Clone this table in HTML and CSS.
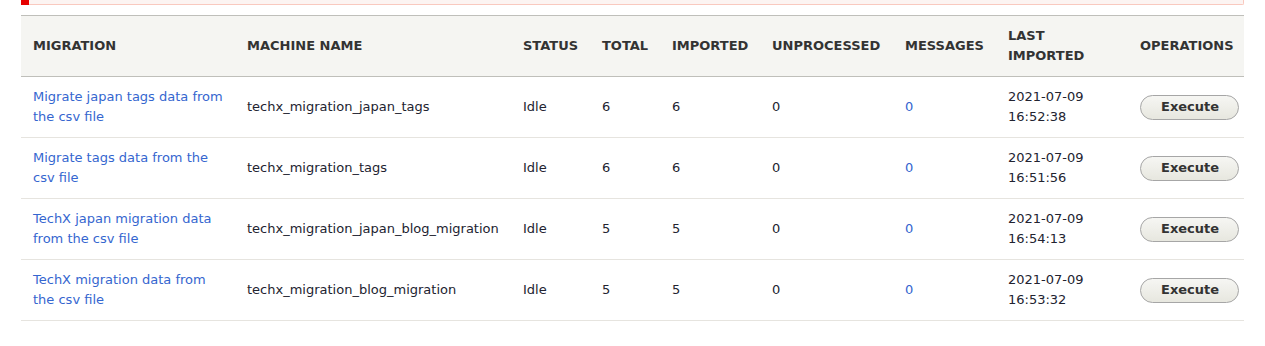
FILE: index.html
```html
<!DOCTYPE html>
<html lang="en">
<head>
<meta charset="utf-8">
<title>Migrations</title>
<link rel="stylesheet" href="styles.css">
</head>
<body>
<div class="page">
  <div class="messages messages-error"></div>
  <table class="migrations">
    <colgroup>
      <col class="c-mig"><col class="c-machine"><col class="c-status"><col class="c-total"><col class="c-imported"><col class="c-unproc"><col class="c-msg"><col class="c-last"><col class="c-ops">
    </colgroup>
    <thead>
      <tr>
        <th>Migration</th>
        <th>Machine Name</th>
        <th>Status</th>
        <th>Total</th>
        <th>Imported</th>
        <th>Unprocessed</th>
        <th>Messages</th>
        <th>Last Imported</th>
        <th>Operations</th>
      </tr>
    </thead>
    <tbody>
      <tr>
        <td><a href="#">Migrate japan tags data from the csv file</a></td>
        <td>techx_migration_japan_tags</td>
        <td>Idle</td>
        <td>6</td>
        <td>6</td>
        <td>0</td>
        <td><a href="#">0</a></td>
        <td>2021-07-09<br>16:52:38</td>
        <td><button class="button">Execute</button></td>
      </tr>
      <tr>
        <td><a href="#">Migrate tags data from the csv file</a></td>
        <td>techx_migration_tags</td>
        <td>Idle</td>
        <td>6</td>
        <td>6</td>
        <td>0</td>
        <td><a href="#">0</a></td>
        <td>2021-07-09<br>16:51:56</td>
        <td><button class="button">Execute</button></td>
      </tr>
      <tr>
        <td><a href="#">TechX japan migration data from the csv file</a></td>
        <td>techx_migration_japan_blog_migration</td>
        <td>Idle</td>
        <td>5</td>
        <td>5</td>
        <td>0</td>
        <td><a href="#">0</a></td>
        <td>2021-07-09<br>16:54:13</td>
        <td><button class="button">Execute</button></td>
      </tr>
      <tr>
        <td><a href="#">TechX migration data from the csv file</a></td>
        <td>techx_migration_blog_migration</td>
        <td>Idle</td>
        <td>5</td>
        <td>5</td>
        <td>0</td>
        <td><a href="#">0</a></td>
        <td>2021-07-09<br>16:53:32</td>
        <td><button class="button">Execute</button></td>
      </tr>
    </tbody>
  </table>
</div>
</body>
</html>
```
FILE: styles.css
```css
html, body {
  margin: 0;
  padding: 0;
  background: #fff;
}
body {
  font-family: "DejaVu Sans", "Liberation Sans", sans-serif;
  font-size: 13px;
  line-height: 20px;
  color: #222330;
}
.page {
  padding: 0 21px;
}
.messages {
  height: 4px;
  margin: 0 0 10px 8px;
  border: 1px solid #f9c9bf;
  border-top: 0;
  border-left: 0;
  border-radius: 0 0 2px 0;
  background: #fcf4f2;
  box-shadow: -8px 0 0 #e60000;
}
.migrations {
  width: 1223px;
  table-layout: fixed;
  border-collapse: collapse;
}
.c-mig { width: 214px; }
.c-machine { width: 276px; }
.c-status { width: 79px; }
.c-total { width: 70px; }
.c-imported { width: 100px; }
.c-unproc { width: 133px; }
.c-msg { width: 103px; }
.c-last { width: 132px; }
.c-ops { width: 116px; }
.migrations thead tr {
  border-top: 1px solid #bfbfba;
  border-bottom: 1px solid #bfbfba;
  background: #f5f5f2;
}
.migrations th {
  padding: 10px 12px;
  text-align: left;
  text-transform: uppercase;
  font-weight: bold;
  color: #333;
  vertical-align: middle;
}
.migrations td {
  padding: 10px 12px;
  vertical-align: middle;
  text-align: left;
}
.migrations tbody tr {
  border-bottom: 1px solid #e6e4df;
}
.migrations a {
  color: #3566cf;
  text-decoration: none;
}
.button {
  display: block;
  font-family: "DejaVu Sans", "Liberation Sans", sans-serif;
  font-size: 13px;
  font-weight: bold;
  line-height: 15px;
  color: #333;
  padding: 3px 20px 5px;
  border: 1px solid #a6a6a6;
  border-radius: 20em;
  background: linear-gradient(to bottom, #f6f6f3, #e7e7df);
  cursor: pointer;
  width: 99px;
}
```
